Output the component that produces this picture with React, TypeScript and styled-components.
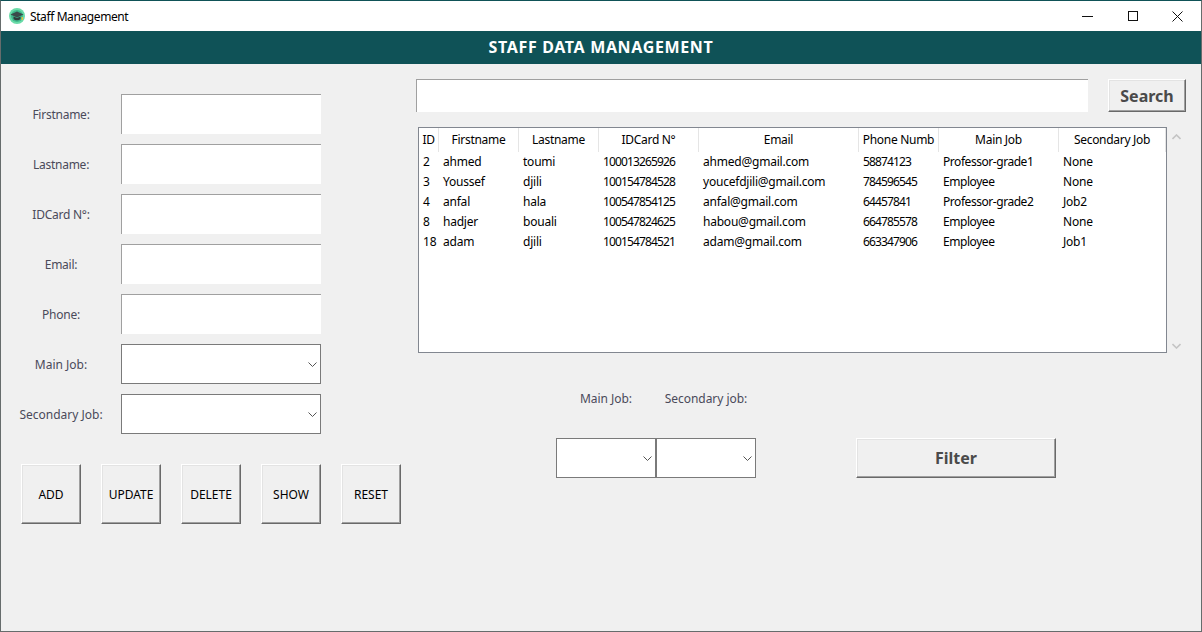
import React from "react";
import styled, { createGlobalStyle } from "styled-components";

interface Staff {
  id: number
  firstname: string
  lastname: string
  card: string
  email: string
  phone: string
  mainJob: string
  secondJob: string
}

const staff: Staff[] = [
  {id: 2, firstname: "ahmed", lastname: "toumi", card: "100013265926", email: "ahmed@gmail.com", phone: "58874123", mainJob: "Professor-grade1", secondJob: "None"},
  {id: 3, firstname: "Youssef", lastname: "djili", card: "100154784528", email: "youcefdjili@gmail.com", phone: "784596545", mainJob: "Employee", secondJob: "None"},
  {id: 4, firstname: "anfal", lastname: "hala", card: "100547854125", email: "anfal@gmail.com", phone: "64457841", mainJob: "Professor-grade2", secondJob: "Job2"},
  {id: 8, firstname: "hadjer", lastname: "bouali", card: "100547824625", email: "habou@gmail.com", phone: "664785578", mainJob: "Employee", secondJob: "None"},
  {id: 18, firstname: "adam", lastname: "djili", card: "100154784521", email: "adam@gmail.com", phone: "663347906", mainJob: "Employee", secondJob: "Job1"},
]

const columns = ["ID", "Firstname", "Lastname", "IDCard N°", "Email", "Phone Numb", "Main Job", "Secondary Job"]
const textFields = ["Firstname:", "Lastname:", "IDCard N°:", "Email:", "Phone:"]
const comboFields = ["Main Job:", "Secondary Job:"]
const actions = ["ADD", "UPDATE", "DELETE", "SHOW", "RESET"]

const Chevron = () => (
  <svg width="9" height="5" viewBox="0 0 9 5" fill="none" stroke="#555" strokeWidth="1">
    <path d="M0.5 0.5 L4.5 4.5 L8.5 0.5" />
  </svg>
)

const AppIcon = () => (
  <svg width="16" height="16" viewBox="0 0 16 16">
    <circle cx="8" cy="8" r="8" fill="#6adba8" />
    <circle cx="8" cy="8" r="6" fill="#3fb98c" />
    <path d="M1.5 6.5 L8 3.5 L14.5 6.5 L8 9.5 Z" fill="#3b4a4a" />
    <path d="M4.5 8.5 V11 C6 12.8 10 12.8 11.5 11 V8.5 L8 10 Z" fill="#2f3d3d" />
    <rect x="12.5" y="9" width="1.5" height="3" fill="#e0c040" />
  </svg>
)

const App = () => (
  <Window>
    <GlobalStyle />
    <TitleBar>
      <TitleLeft>
        <AppIcon />
        <TitleText>Staff Management</TitleText>
      </TitleLeft>
      <WindowControls>
        <WindowControl>
          <svg width="11" height="1" viewBox="0 0 11 1"><rect width="11" height="1" fill="#111" /></svg>
        </WindowControl>
        <WindowControl>
          <svg width="10" height="10" viewBox="0 0 10 10" fill="none" stroke="#111"><rect x="0.5" y="0.5" width="9" height="9" /></svg>
        </WindowControl>
        <WindowControl>
          <svg width="11" height="11" viewBox="0 0 11 11" stroke="#111"><path d="M0.5 0.5 L10.5 10.5 M10.5 0.5 L0.5 10.5" /></svg>
        </WindowControl>
      </WindowControls>
    </TitleBar>
    <Banner>STAFF DATA MANAGEMENT</Banner>
    <Body>
      <LeftPanel>
        <Form>
          {textFields.map(f => (
            <FormRow key={f}>
              <FieldLabel>{f}</FieldLabel>
              <TextInput />
            </FormRow>
          ))}
          {comboFields.map(f => (
            <FormRow key={f}>
              <FieldLabel $wide>{f}</FieldLabel>
              <Combo $width={200}><Chevron /></Combo>
            </FormRow>
          ))}
        </Form>
        <Actions>
          {actions.map(a => <ActionButton key={a}>{a}</ActionButton>)}
        </Actions>
      </LeftPanel>
      <RightPanel>
        <SearchRow>
          <SearchInput />
          <SearchButton>Search</SearchButton>
        </SearchRow>
        <TableRow>
          <TableBox>
            <StaffTable>
              <colgroup>
                {[20, 80, 80, 100, 160, 80, 120, 107].map((w, i) => <col key={i} width={w} />)}
              </colgroup>
              <thead>
                <tr>{columns.map(c => <HeadCell key={c}>{c}</HeadCell>)}</tr>
              </thead>
              <tbody>
                {staff.map(s => (
                  <tr key={s.id}>
                    <Cell>{s.id}</Cell>
                    <Cell>{s.firstname}</Cell>
                    <Cell>{s.lastname}</Cell>
                    <NumberCell>{s.card}</NumberCell>
                    <Cell>{s.email}</Cell>
                    <NumberCell>{s.phone}</NumberCell>
                    <Cell $tight>{s.mainJob}</Cell>
                    <Cell>{s.secondJob}</Cell>
                  </tr>
                ))}
              </tbody>
            </StaffTable>
          </TableBox>
          <ScrollArrows>
            <svg width="9" height="6" viewBox="0 0 9 6" fill="none" stroke="#c4c4c4" strokeWidth="1.6"><path d="M0.5 5 L4.5 1 L8.5 5" /></svg>
            <svg width="9" height="6" viewBox="0 0 9 6" fill="none" stroke="#c4c4c4" strokeWidth="1.6"><path d="M0.5 1 L4.5 5 L8.5 1" /></svg>
          </ScrollArrows>
        </TableRow>
        <FilterLabels>
          <FilterLabel $width={100}>Main Job:</FilterLabel>
          <FilterLabel $width={100}>Secondary job:</FilterLabel>
        </FilterLabels>
        <FilterRow>
          <Combo $width={100}><Chevron /></Combo>
          <Combo $width={100}><Chevron /></Combo>
          <FilterButton>Filter</FilterButton>
        </FilterRow>
      </RightPanel>
    </Body>
  </Window>
)

export default App

const GlobalStyle = createGlobalStyle`
  html, body {
    margin: 0;
    padding: 0;
    overflow: hidden;
  }
  * {
    box-sizing: border-box;
  }
`

const Window = styled.div`
  width: 1202px;
  height: 632px;
  display: flex;
  flex-direction: column;
  background: #f0f0f0;
  border: 1px solid #666c6c;
  border-top-color: #0f5257;
  font-family: "Noto Sans", "Open Sans", sans-serif;
  font-size: 12px;
  color: #000;
  overflow: hidden;
`

const TitleBar = styled.div`
  height: 30px;
  flex-shrink: 0;
  display: flex;
  align-items: center;
  justify-content: space-between;
  background: #fff;
`

const TitleLeft = styled.div`
  display: flex;
  align-items: center;
  gap: 5px;
  padding-left: 8px;
`

const TitleText = styled.span`
  font-size: 12px;
  letter-spacing: -0.4px;
`

const WindowControls = styled.div`
  display: flex;
  padding-right: 1px;
`

const WindowControl = styled.div`
  width: 45px;
  height: 30px;
  display: flex;
  align-items: center;
  justify-content: center;
`

const Banner = styled.div`
  height: 33px;
  flex-shrink: 0;
  display: flex;
  align-items: center;
  justify-content: center;
  padding-bottom: 1px;
  background: #0f5257;
  color: #fff;
  font-size: 16px;
  font-weight: bold;
  letter-spacing: 0.65px;
`

const Body = styled.div`
  flex: 1;
  display: flex;
`

const LeftPanel = styled.div`
  width: 415px;
  flex-shrink: 0;
  display: flex;
  flex-direction: column;
  padding-top: 30px;
`

const Form = styled.div`
  display: flex;
  flex-direction: column;
  gap: 10px;
`

const FormRow = styled.div`
  display: flex;
  align-items: center;
`

const FieldLabel = styled.label<{ $wide?: boolean }>`
  width: 120px;
  text-align: center;
  color: #4a4a5a;
  letter-spacing: ${p => (p.$wide ? "0" : "-0.25px")};
`

const TextInput = styled.div`
  width: 200px;
  height: 40px;
  background: #fff;
  border-top: 1px solid #a0a0a0;
  border-left: 1px solid #a0a0a0;
`

const Combo = styled.div<{ $width: number }>`
  width: ${p => p.$width}px;
  height: 40px;
  display: flex;
  align-items: center;
  justify-content: flex-end;
  padding-right: 3px;
  background: #fff;
  border: 1px solid #7a7a7a;
`

const RaisedButton = styled.button`
  padding: 0;
  background: #f0f0f0;
  border: 1px solid;
  border-color: #fff #696969 #696969 #fff;
  box-shadow: inset -1px -1px 0 #a0a0a0, inset 1px 1px 0 #e3e3e3;
  font-family: inherit;
`

const Actions = styled.div`
  display: flex;
  gap: 20px;
  margin: 30px 0 0 20px;
`

const ActionButton = styled(RaisedButton)`
  width: 60px;
  height: 60px;
  font-size: 12px;
  color: #000;
`

const RightPanel = styled.div`
  flex: 1;
  display: flex;
  flex-direction: column;
  padding-top: 15px;
`

const SearchRow = styled.div`
  display: flex;
  gap: 20px;
`

const SearchInput = styled.div`
  width: 672px;
  height: 33px;
  background: #fff;
  border-top: 1px solid #a0a0a0;
  border-left: 1px solid #a0a0a0;
`

const SearchButton = styled(RaisedButton)`
  width: 78px;
  height: 33px;
  font-size: 16px;
  font-weight: bold;
  color: #4a4a4a;
`

const TableRow = styled.div`
  display: flex;
  margin: 15px 0 0 2px;
`

const TableBox = styled.div`
  width: 749px;
  height: 226px;
  background: #fff;
  border: 1px solid #828790;
`

const StaffTable = styled.table`
  width: 747px;
  table-layout: fixed;
  border-collapse: separate;
  border-spacing: 0;
`

const HeadCell = styled.th`
  height: 24px;
  padding: 0 0 1px;
  font-weight: normal;
  font-size: 12px;
  letter-spacing: -0.3px;
  text-align: center;
  white-space: nowrap;
  overflow: hidden;
  border-right: 1px solid #e5e5e5;
`

const Cell = styled.td<{ $tight?: boolean }>`
  height: 20px;
  padding: 0 0 1px 4px;
  font-size: 12px;
  letter-spacing: ${p => (p.$tight ? "-0.45px" : "-0.22px")};
  white-space: nowrap;
`

const NumberCell = styled(Cell)`
  letter-spacing: -0.86px;
`

const ScrollArrows = styled.div`
  width: 18px;
  height: 226px;
  display: flex;
  flex-direction: column;
  align-items: center;
  justify-content: space-between;
  padding: 7px 0 4px;
`

const FilterLabels = styled.div`
  display: flex;
  margin: 37px 0 0 140px;
`

const FilterLabel = styled.span<{ $width: number }>`
  width: ${p => p.$width}px;
  text-align: center;
  color: #4a4a5a;
  letter-spacing: -0.05px;
`

const FilterRow = styled.div`
  display: flex;
  margin: 31px 0 0 140px;
`

const FilterButton = styled(RaisedButton)`
  width: 200px;
  height: 40px;
  margin-left: 100px;
  font-size: 16px;
  font-weight: bold;
  color: #4a4a4a;
`
